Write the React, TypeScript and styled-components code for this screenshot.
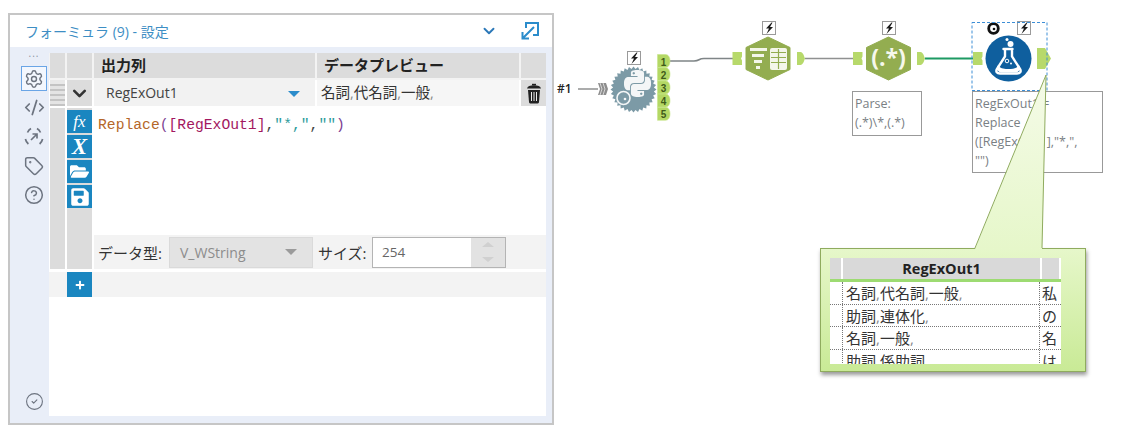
import styled, { createGlobalStyle } from 'styled-components'
import { ChevronDown, CircleCheck, CircleHelp, CodeXml, Settings, Tag } from 'lucide-react'
import { FaFolderOpen, FaPlus, FaSave } from 'react-icons/fa'
import { SiPython } from 'react-icons/si'

const CJK = `"Open Sans", "Noto Sans CJK JP", sans-serif`

const GlobalStyle = createGlobalStyle`
  html, body { margin: 0; padding: 0; background: #fff; }
  body { font-family: ${CJK}; color: #333; }
  * { box-sizing: border-box; }
`

const Comma = () => <CommaMark>,</CommaMark>

const MainMenuIcon = () => (
  <svg width="22" height="22" viewBox="0 0 22 22" fill="none" stroke="#6d7480" strokeWidth="1.7">
    <path d="M4.5 6.5A9 9 0 0 1 8 2.6M14 2.6a9 9 0 0 1 3.5 3.9M19.6 13a9 9 0 0 1-3 5M5.4 18a9 9 0 0 1-3-5" />
    <path d="M8 14l6-6M9.5 8H14v4.5" />
  </svg>
)

const TrashIcon = () => (
  <svg width="16" height="21" viewBox="0 0 16 21">
    <path d="M6 .8h4v1.600h-4z" fill="#222" />
    <path d="M1 5.500C1.500 3 4 2.300 8 2.300s6.500.7 7 3.200z" fill="#222" />
    <path d="M2 7h12l-1 12c-.1 1-1 1.500-2 1.500H5c-1 0-1.900-.5-2-1.500z" fill="#222" />
    <path d="M5.500 9v9M8 9v9M10.500 9v9" stroke="#eee" strokeWidth="1" />
  </svg>
)

const ExpandIcon = () => (
  <svg width="20" height="20" viewBox="0 0 20 20" fill="none" stroke="#2b8ccb" strokeWidth="2">
    <path d="M6 7V2h12v12h-5" />
    <path d="M14 6L2.500 17.500M2.500 11v6.500H9" />
  </svg>
)

const Bolt = ({ x, y }: { x: number; y: number }) => (
  <g>
    <rect x={x - 6.500} y={y - 6.500} width="13" height="13" fill="#fff" stroke="#9a9a9a" />
    <path d={`M${x + 2.500} ${y - 5.500}l-5.500 6h3l-2.500 5.500 6.500-7h-3l2.500-4.500z`} fill="#1c1c1c" />
  </g>
)

const InAnchor = ({ x, y }: { x: number; y: number }) => (
  <path d={`M${x} ${y - 6.500}h9.500v4.500l-1 2 1 2v4.500h-9.500z`} fill="#b7d96b" />
)

const OutAnchor = ({ x, y }: { x: number; y: number }) => (
  <path d={`M${x} ${y - 6.500}h3.500c2.500 0 3.500 4 4.500 6.500-1 2.500-2 6.500-4.500 6.500h-3.500z`} fill="#b7d96b" />
)

const Hexagon = ({ cx, cy }: { cx: number; cy: number }) => (
  <polygon
    points={`${cx},${cy - 21.500} ${cx + 22},${cy - 11} ${cx + 22},${cy + 11} ${cx},${cy + 21.500} ${cx - 22},${cy + 11} ${cx - 22},${cy - 11}`}
    fill="#93ad50"
    stroke="#93ad50"
    strokeWidth="1"
    strokeLinejoin="round"
  />
)

const gearPath = (cx: number, cy: number, outer: number, inner: number, teeth: number) => {
  const pts: string[] = []
  for (let i = 0; i < teeth * 2; i++) {
    const r = i % 2 === 0 ? outer : inner
    const a = (Math.PI * i) / teeth
    pts.push(`${(cx + r * Math.cos(a)).toFixed(1)},${(cy + r * Math.sin(a)).toFixed(1)}`)
  }
  return pts.join(' ')
}

const Workflow = () => (
  <CanvasSvg viewBox="554 0 569 434" width="569" height="434">
    {/* wires */}
    <path d="M578 89h20" stroke="#8f9191" strokeWidth="1.500" fill="none" />
    <path d="M670 61h24c6 0 4-2.500 10-2.500h29" stroke="#7f8587" strokeWidth="1.500" fill="none" />
    <path d="M805 58.500h49" stroke="#8f9191" strokeWidth="1.500" fill="none" />
    <path d="M925 58.500h49" stroke="#1d9a63" strokeWidth="2" fill="none" />

    {/* python tool */}
    <path d="M598 83h8l2 6-2 6h-8l2-6z" fill="#8d8d8d" />
    <path d="M600 83l2 6-2 6M603 83l2 6-2 6" stroke="#e8e8e8" strokeWidth=".8" fill="none" />
    <polygon points={gearPath(633.500, 89.500, 23, 20.500, 32)} fill="#7c9aa6" />
    <SiPython x="624" y="70" size="27" color="#f4f6f7" />
    <circle cx="623.500" cy="98" r="6.500" fill="#7c9aa6" stroke="#f4f6f7" strokeWidth="1.600" />
    <circle cx="625" cy="99" r="1.300" fill="#f4f6f7" />
    <Bolt x={634} y={58} />
    {[1, 2, 3, 4, 5].map((n, i) => (
      <g key={n}>
        <path
          d={`M657.500 ${54.500 + i * 13.200}h8c3 0 4.500 3 4.500 6.500s-1.500 6.500-4.500 6.500h-8z`}
          fill="#b4d865"
          stroke="#c8e58c"
          strokeWidth=".6"
        />
        <PortLabel x="663.500" y={65.500 + i * 13.200} textAnchor="middle">
          {n}
        </PortLabel>
      </g>
    ))}

    {/* text to columns style tool */}
    <InAnchor x={732.500} y={58.500} />
    <Hexagon cx={768} cy={58.500} />
    <g fill="#f4f6ea">
      <rect x="750" y="48" width="17" height="3" />
      <rect x="752" y="54" width="12" height="3" />
      <rect x="754" y="60" width="8" height="3" />
      <rect x="756" y="66" width="4" height="3" />
    </g>
    <rect x="770" y="48" width="17" height="22" rx="2" fill="#f4f6ea" />
    <path d="M778.500 49v20M771 52.500h15M771 57.500h15M771 62.500h15" stroke="#93ad50" strokeWidth="1.200" />
    <Bolt x={769} y={28} />
    <OutAnchor x={797} y={58.500} />

    {/* regex tool */}
    <InAnchor x={853} y={58.500} />
    <Hexagon cx={888.500} cy={58.500} />
    <RegexLabel x="888.500" y="66" textAnchor="middle">
      (.*)
    </RegexLabel>
    <Bolt x={889} y={28} />
    <OutAnchor x={917} y={58.500} />

    {/* formula tool */}
    <InAnchor x={973} y={58.500} />
    <circle cx="1008.500" cy="58.500" r="23" fill="#0f5f9e" />
    <circle cx="1010.500" cy="44" r="3" fill="#fff" />
    <circle cx="1007" cy="39.500" r="1.500" fill="#fff" />
    <path
      d="M1003.500 49h9M1005 49v7.500l-8 12.500c-1.600 2.500 0 4.500 3 4.500h17c3 0 4.600-2 3-4.500l-8-12.500v-7.500"
      fill="#0f5f9e"
      stroke="#fff"
      strokeWidth="2.400"
      strokeLinecap="round"
    />
    <path d="M997.500 65.500c4 3.500 7.500 3.500 11 3.500s7 0 11-3.500c1 4-.5 7-3.500 7h-15c-3 0-4.500-3-3.500-7z" fill="#fff" />
    <circle cx="1007" cy="61" r="1.800" fill="none" stroke="#fff" strokeWidth="1" />
    <circle cx="1011" cy="63.500" r="1" fill="#fff" />
    <circle cx="993.500" cy="28.500" r="4.800" fill="none" stroke="#111" strokeWidth="2.800" />
    <circle cx="994" cy="29" r="1.300" fill="#111" />
    <Bolt x={1024} y={28} />
    <path d="M1037 48h8l6 10.500-6 10.500h-8z" fill="#b7d96b" />
    <rect x="972" y="22.500" width="75" height="68" fill="none" stroke="#3d8ed6" strokeWidth="1" strokeDasharray="3 2" />
  </CanvasSvg>
)

export default function App() {
  return (
    <Page>
      <GlobalStyle />
      <Panel>
        <TitleBar>
          <Title>フォーミュラ (9) - 設定</Title>
          <TitleActions>
            <ChevronDown size={18} color="#2b78b8" strokeWidth={2.500} />
            <ExpandIcon />
          </TitleActions>
        </TitleBar>
        <PanelBody>
          <Sidebar>
            <Dots>...</Dots>
            <SideButton $active>
              <Settings size={20} strokeWidth={1.700} />
            </SideButton>
            <SideButton>
              <CodeXml size={21} strokeWidth={2} />
            </SideButton>
            <SideButton>
              <MainMenuIcon />
            </SideButton>
            <SideButton>
              <Tag size={20} strokeWidth={1.800} />
            </SideButton>
            <SideButton>
              <CircleHelp size={20} strokeWidth={1.800} />
            </SideButton>
            <SidebarFoot>
              <CircleCheck size={19} strokeWidth={1.400} />
            </SidebarFoot>
          </Sidebar>
          <Content>
            <HeaderRow>
              <GreyCell $width={15} />
              <GreyCell $width={25} />
              <HeadCell $width={221}>出力列</HeadCell>
              <HeadCell $width={202}>データプレビュー</HeadCell>
              <GreyCell $width={25} />
            </HeaderRow>
            <FieldRow>
              <Grip />
              <GreyCell $width={25}>
                <ChevronDown size={21} color="#333" strokeWidth={3} />
              </GreyCell>
              <FieldSelect>
                RegExOut1
                <BlueCaret />
              </FieldSelect>
              <Preview>
                名詞<Comma />代名詞<Comma />一般<Comma />
              </Preview>
              <GreyCell $width={25}>
                <TrashIcon />
              </GreyCell>
            </FieldRow>
            <EditorRow>
              <GreyCell $width={15} />
              <ToolColumn>
                <ToolButton>
                  <FxText>fx</FxText>
                </ToolButton>
                <ToolButton>
                  <VarText>X</VarText>
                </ToolButton>
                <ToolButton>
                  <FaFolderOpen size={19} />
                </ToolButton>
                <ToolButton>
                  <FaSave size={20} />
                </ToolButton>
              </ToolColumn>
              <EditorColumn>
                <Formula>
                  <Fn>Replace</Fn>
                  <Paren>(</Paren>
                  <Field>[RegExOut1]</Field>
                  <Punct>,</Punct>
                  <Str>"*,"</Str>
                  <Punct>,</Punct>
                  <Str>""</Str>
                  <Paren>)</Paren>
                </Formula>
                <TypeBar>
                  <TypeLabel>データ型:</TypeLabel>
                  <TypeSelect>
                    V_WString
                    <GreyCaret />
                  </TypeSelect>
                  <SizeLabel>サイズ:</SizeLabel>
                  <SizeInput>
                    <SizeValue>254</SizeValue>
                    <Spinner>
                      <SpinUp />
                      <SpinDown />
                    </Spinner>
                  </SizeInput>
                </TypeBar>
              </EditorColumn>
            </EditorRow>
            <AddRow>
              <AddButton>
                <FaPlus size={10} />
              </AddButton>
            </AddRow>
          </Content>
        </PanelBody>
      </Panel>
      <Canvas>
        <Workflow />
        <InputTag>#1</InputTag>
        <Annotation $left={298} $width={70} $height={45}>
          Parse:
          <br />
          (.*)\*,(.*)
        </Annotation>
        <Annotation $left={418} $width={131} $height={82}>
          RegExOut1 =
          <br />
          Replace
          <br />
          ([RegExOut1],"*,",
          <br />
          "")
        </Annotation>
        <Callout>
          <Pointer width="90" height="175" viewBox="150 -174 90 175">
            <defs>
              <linearGradient id="pointerFill" x1="0" x2="0" y1="0" y2="1">
                <stop offset="0" stopColor="#f5fbe8" />
                <stop offset="1" stopColor="#e6f7ca" />
              </linearGradient>
            </defs>
            <polygon points="226,-173 222,1 155,1" fill="url(#pointerFill)" />
            <polyline points="155,0 226,-173 222,0" fill="none" stroke="#8fab5e" strokeWidth="1" />
          </Pointer>
          <ResultTable>
            <ResultHead>
              <ResultHeadCell $width={11} />
              <ResultHeadCell $width={197}>RegExOut1</ResultHeadCell>
              <ResultHeadCell $width={17} />
            </ResultHead>
            <ResultRow>
              <RecordCell />
              <ValueCell>
                名詞<Comma />代名詞<Comma />一般<Comma />
              </ValueCell>
              <NextCell>私</NextCell>
            </ResultRow>
            <ResultRow>
              <RecordCell />
              <ValueCell>
                助詞<Comma />連体化<Comma />
              </ValueCell>
              <NextCell>の</NextCell>
            </ResultRow>
            <ResultRow>
              <RecordCell />
              <ValueCell>
                名詞<Comma />一般<Comma />
              </ValueCell>
              <NextCell>名</NextCell>
            </ResultRow>
            <ResultRow>
              <RecordCell />
              <ValueCell>
                助詞<Comma />係助詞
              </ValueCell>
              <NextCell>は</NextCell>
            </ResultRow>
          </ResultTable>
        </Callout>
      </Canvas>
    </Page>
  )
}

const Page = styled.div`
  display: flex;
  align-items: flex-start;
  width: 1123px;
  height: 434px;
  padding: 13px 0 0 8px;
  overflow: hidden;
  background: #fff;
`

const Panel = styled.section`
  display: flex;
  flex-direction: column;
  flex: none;
  width: 546px;
  height: 412px;
  border: 2px solid #c6c6c6;
  background: #e9eef8;
`

const TitleBar = styled.header`
  display: flex;
  align-items: center;
  justify-content: space-between;
  height: 32px;
  padding: 0 12px 0 15px;
  background: #fff;
`

const Title = styled.h1`
  margin: 0;
  font-size: 14px;
  font-weight: 400;
  color: #3d8ec4;
`

const TitleActions = styled.div`
  display: flex;
  align-items: center;
  gap: 22px;
`

const PanelBody = styled.div`
  display: flex;
  flex: 1;
  min-height: 0;
  padding-top: 6px;
`

const Sidebar = styled.nav`
  display: flex;
  flex-direction: column;
  align-items: flex-end;
  flex: none;
  width: 39px;
  padding-right: 2px;
  padding-bottom: 12px;
  color: #6d7480;
`

const Dots = styled.div`
  width: 26px;
  height: 13px;
  font-size: 10px;
  line-height: 0;
  letter-spacing: 1px;
  text-align: center;
  color: #8b93a0;
`

const SideButton = styled.div<{ $active?: boolean }>`
  display: flex;
  align-items: center;
  justify-content: center;
  width: 26px;
  height: 25px;
  margin-bottom: 4px;
  border: ${(p) => (p.$active ? '1.5px solid #6aa5e6' : '0')};
  background: ${(p) => (p.$active ? '#f3f7fe' : 'transparent')};
`

const SidebarFoot = styled.div`
  display: flex;
  justify-content: center;
  width: 26px;
  margin-top: auto;
`

const Content = styled.main`
  display: flex;
  flex-direction: column;
  flex: 1;
  margin: 0 7px 7px 0;
  background: #fff;
`

const HeaderRow = styled.div`
  display: flex;
  gap: 2px;
  height: 27px;
  padding: 0 0 2px 1px;
  background: #f3f3f3;
`

const GreyCell = styled.div<{ $width: number }>`
  display: flex;
  align-items: center;
  justify-content: center;
  flex: none;
  width: ${(p) => p.$width}px;
  background: #dcdcdc;
`

const HeadCell = styled.div<{ $width: number }>`
  flex: none;
  width: ${(p) => p.$width}px;
  padding-left: 7px;
  font-size: 15px;
  font-weight: 700;
  line-height: 25px;
  color: #222;
  background: #dcdcdc;
`

const FieldRow = styled.div`
  display: flex;
  gap: 2px;
  height: 28px;
  padding: 0 0 2px 1px;
  background: #fff;
`

const Grip = styled.div`
  flex: none;
  width: 15px;
  background: repeating-linear-gradient(#c4c4c4 0 2px, #e4e4e4 2px 5px);
  background-size: 100% 22px;
  background-position: 0 4px;
  background-repeat: no-repeat;
  background-color: #e9e9e9;
`

const FieldSelect = styled.div`
  position: relative;
  flex: none;
  width: 221px;
  padding-left: 12px;
  font-size: 14px;
  line-height: 26px;
  color: #444;
  background: #f2f2f2;
`

const BlueCaret = styled.span`
  position: absolute;
  top: 11px;
  right: 15px;
  border-style: solid;
  border-width: 6px 6px 0;
  border-color: #2b8ccb transparent transparent;
`

const GreyCaret = styled(BlueCaret)`
  border-top-color: #9b9b9b;
`

const Preview = styled.div`
  flex: none;
  width: 202px;
  padding-left: 4px;
  font-size: 14.500px;
  line-height: 26px;
  color: #333;
  background: #f6f6f6;
`

const CommaMark = styled.span`
  color: #8a8a8a;
`

const EditorRow = styled.div`
  display: flex;
  gap: 2px;
  height: 161px;
  padding-left: 1px;
`

const ToolColumn = styled.div`
  display: flex;
  flex-direction: column;
  gap: 2px;
  flex: none;
  width: 25px;
  padding-top: 2px;
  background: #dcdcdc;
`

const ToolButton = styled.div`
  display: flex;
  align-items: center;
  justify-content: center;
  height: 23px;
  color: #fff;
  background: #1a86c0;
`

const FxText = styled.span`
  font-family: "Liberation Serif", serif;
  font-size: 17px;
  font-style: italic;
  line-height: 1;
`

const VarText = styled(FxText)`
  font-size: 23px;
  font-weight: 700;
`

const EditorColumn = styled.div`
  display: flex;
  flex-direction: column;
  flex: 1;
  min-width: 0;
`

const Formula = styled.code`
  flex: 1;
  padding: 8px 0 0 4px;
  font-family: "Liberation Mono", monospace;
  font-size: 14.700px;
  line-height: 18px;
  white-space: pre;
`

const Fn = styled.span`
  color: #b5672a;
`

const Paren = styled.span`
  color: #7d3f93;
`

const Field = styled.span`
  color: #a3185f;
`

const Punct = styled.span`
  color: #444;
`

const Str = styled.span`
  color: #2d9c9c;
`

const TypeBar = styled.div`
  display: flex;
  align-items: center;
  flex: none;
  height: 34px;
  padding-left: 4px;
  background: #f3f3f3;
`

const TypeLabel = styled.span`
  width: 71px;
  font-size: 15px;
  color: #333;
`

const TypeSelect = styled.div`
  position: relative;
  width: 144px;
  height: 31px;
  padding-left: 10px;
  font-size: 14px;
  line-height: 29px;
  color: #8c8c8c;
  border: 1px solid #dadada;
  background: #e3e3e3;
`

const SizeLabel = styled.span`
  width: 59px;
  padding-left: 5px;
  font-size: 15px;
  color: #333;
`

const SizeInput = styled.div`
  display: flex;
  width: 134px;
  height: 31px;
  border: 1px solid #b4b4b4;
  background: #fff;
`

const SizeValue = styled.span`
  flex: 1;
  padding-left: 9px;
  font-size: 13.500px;
  line-height: 29px;
  color: #666;
`

const Spinner = styled.div`
  display: flex;
  flex-direction: column;
  width: 34px;
  background: #e2e2e2;
`

const SpinUp = styled.span`
  display: flex;
  flex: 1;
  align-items: center;
  justify-content: center;
  &::after {
    content: '';
    border-style: solid;
    border-width: 0 6px 5px;
    border-color: transparent transparent #d0d0d0;
  }
`

const SpinDown = styled(SpinUp)`
  &::after {
    border-width: 5px 6px 0;
    border-color: #d0d0d0 transparent transparent;
  }
`

const AddRow = styled.div`
  height: 25px;
  margin-top: 3px;
  padding-left: 18px;
  background: #f3f3f3;
`

const AddButton = styled.div`
  display: flex;
  align-items: center;
  justify-content: center;
  width: 25px;
  height: 25px;
  color: #fff;
  background: #1a86c0;
`

const Canvas = styled.div`
  position: relative;
  flex: none;
  width: 569px;
  height: 434px;
  margin-top: -13px;
`

const CanvasSvg = styled.svg`
  position: absolute;
  top: 0;
  left: 0;
`

const PortLabel = styled.text`
  font-family: "Liberation Sans", sans-serif;
  font-size: 10px;
  font-weight: 700;
  fill: #3f5a1a;
`

const RegexLabel = styled.text`
  font-family: "Open Sans", sans-serif;
  font-size: 23px;
  font-weight: 700;
  fill: #f6f8ec;
`

const InputTag = styled.span`
  position: absolute;
  top: 80px;
  left: 3px;
  font-family: "Open Sans", sans-serif;
  font-size: 12px;
  font-weight: 600;
  color: #222;
`

const Annotation = styled.div<{ $left: number; $width: number; $height: number }>`
  position: absolute;
  top: 91px;
  left: ${(p) => p.$left}px;
  width: ${(p) => p.$width}px;
  height: ${(p) => p.$height}px;
  padding: 2px 2px;
  font-family: "Open Sans", sans-serif;
  font-size: 12.500px;
  font-weight: 500;
  line-height: 19px;
  white-space: nowrap;
  color: #7a8084;
  background: #fff;
  border: 1.500px solid #999;
`

const Callout = styled.div`
  position: absolute;
  top: 248px;
  left: 266px;
  width: 266px;
  height: 124px;
  padding: 9px 0 0 9px;
  border: 1px solid #8fab5e;
  background: linear-gradient(#e6f7ca, #c9ea96);
  box-shadow: 1px 3px 4px rgba(0, 0, 0, 0.4);
`

const Pointer = styled.svg`
  position: absolute;
  top: -175px;
  left: 149px;
  overflow: visible;
`

const ResultTable = styled.div`
  width: 231px;
  height: 106px;
  overflow: hidden;
  background: #fff;
`

const ResultHead = styled.div`
  display: flex;
  gap: 2px;
  height: 24px;
  border-bottom: 3px solid #9ddb72;
`

const ResultHeadCell = styled.div<{ $width: number }>`
  flex: none;
  width: ${(p) => p.$width}px;
  font-size: 14.500px;
  font-weight: 700;
  line-height: 21px;
  text-align: center;
  color: #222;
  background: #d9d9d9;
`

const ResultRow = styled.div`
  display: flex;
  height: 22.500px;
  border-bottom: 1px dotted #777;
  font-size: 15px;
  line-height: 22px;
  color: #333;
`

const RecordCell = styled.div`
  flex: none;
  width: 13px;
  border-right: 1px dotted #777;
`

const ValueCell = styled.div`
  flex: none;
  width: 197px;
  padding-left: 3px;
  border-right: 1px dotted #777;
`

const NextCell = styled.div`
  flex: none;
  padding-left: 2px;
`
